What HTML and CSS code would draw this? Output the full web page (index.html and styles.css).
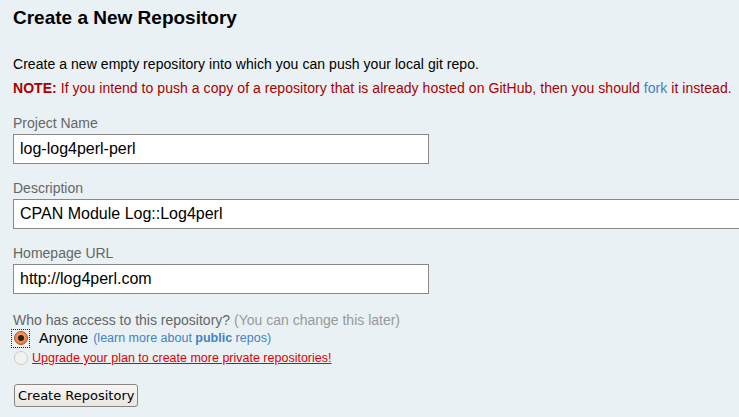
FILE: index.html
```html
<!DOCTYPE html>
<html lang="en">
<head>
  <meta charset="UTF-8">
  <title>Create a New Repository</title>
  <link rel="stylesheet" href="styles.css">
</head>
<body>

<div id="new-repo">
  <h1>Create a New Repository</h1>

  <p class="intro">Create a new empty repository into which you can push your local git repo.</p>
  <p class="note"><strong>NOTE:</strong> If you intend to push a copy of a repository that is already hosted on GitHub, then you should <a href="#">fork</a> it instead.</p>

  <form>
    <div class="field">
      <label for="repo-name">Project Name</label>
      <input id="repo-name" class="short" type="text" value="log-log4perl-perl">
    </div>

    <div class="field">
      <label for="repo-desc">Description</label>
      <input id="repo-desc" class="long" type="text" value="CPAN Module Log::Log4perl">
    </div>

    <div class="field">
      <label for="repo-url">Homepage URL</label>
      <input id="repo-url" class="short" type="text" value="http://log4perl.com">
    </div>

    <div class="access">
      <div class="question">Who has access to this repository? <span class="hint">(You can change this later)</span></div>
      <div class="option">
        <span class="focus"><span class="radio checked"></span></span>
        <span class="anyone">Anyone</span>
        <span class="more">(learn more about <a href="#"><b>public</b></a> repos)</span>
      </div>
      <div class="option">
        <span class="radio disabled"></span>
        <a class="upgrade" href="#">Upgrade your plan to create more private repositories!</a>
      </div>
    </div>

    <button type="button" class="submit">Create Repository</button>
  </form>
</div>

</body>
</html>
```

FILE: styles.css
```css
body {
  margin: 0;
  background-color: #e9f1f4;
  font-family: "Liberation Sans", Arial, sans-serif;
  color: #000;
}

#new-repo {
  padding: 6px 0 0 13px;
}

h1 {
  font-size: 19px;
  font-weight: bold;
  margin: 0 0 26px 0;
  line-height: 24px;
}

p {
  font-size: 14px;
  line-height: 16px;
  margin: 0 0 8px 0;
  letter-spacing: 0.05px;
}

.note {
  color: #aa0000;
  margin-bottom: 18px;
}

.note a {
  color: #4183c4;
  text-decoration: none;
}

.field {
  margin-bottom: 15px;
}

.field label {
  display: block;
  color: #666;
  font-size: 14px;
  line-height: 18px;
  margin-bottom: 2px;
}

.field input {
  box-sizing: border-box;
  height: 30px;
  border: 1px solid #888;
  background: #fff;
  font-family: "Liberation Sans", Arial, sans-serif;
  font-size: 16px;
  padding: 0 6px;
  color: #000;
  margin: 0;
}

.short {
  width: 416px;
}

.long {
  width: 740px;
}

.access {
  font-size: 14px;
  margin-top: 18px;
}

.question {
  color: #666;
  line-height: 16px;
}

.hint {
  color: #999;
}

.option {
  display: flex;
  align-items: center;
  height: 20px;
}

.focus {
  display: flex;
  align-items: center;
  justify-content: center;
  width: 17px;
  height: 17px;
  outline: 1px dotted #222;
  margin: 0 10px 0 -1px;
}

.radio {
  display: inline-block;
  box-sizing: border-box;
  width: 14px;
  height: 14px;
  border-radius: 50%;
  border: 1px solid #b8b4ae;
  background: #fff;
  position: relative;
}

.radio.checked {
  border-color: #a4582c;
  background: radial-gradient(circle at 50% 40%, #ffa468, #ec6d2c);
}

.radio.checked::after {
  content: "";
  position: absolute;
  left: 3px;
  top: 3px;
  width: 6px;
  height: 6px;
  border-radius: 50%;
  background: #222;
}

.radio.disabled {
  background: #f2f2f0;
  border-color: #cfcbc6;
  margin: 0 4px 0 1px;
}

.anyone {
  font-size: 14.5px;
  margin-right: 5px;
}

.more {
  color: #4183c4;
  font-size: 12.5px;
}

.more a {
  color: #4183c4;
  text-decoration: none;
}

.upgrade {
  color: #e00000;
  font-size: 12.5px;
  text-decoration: underline;
}

.submit {
  margin-top: 16px;
  margin-left: 1px;
  height: 23px;
  padding: 0 3px;
  font-family: "DejaVu Sans", sans-serif;
  font-size: 13px;
  color: #000;
  border: 1px solid #8a8580;
  border-radius: 3px;
  background: linear-gradient(#f8f7f6, #e9e6e2);
}
```
